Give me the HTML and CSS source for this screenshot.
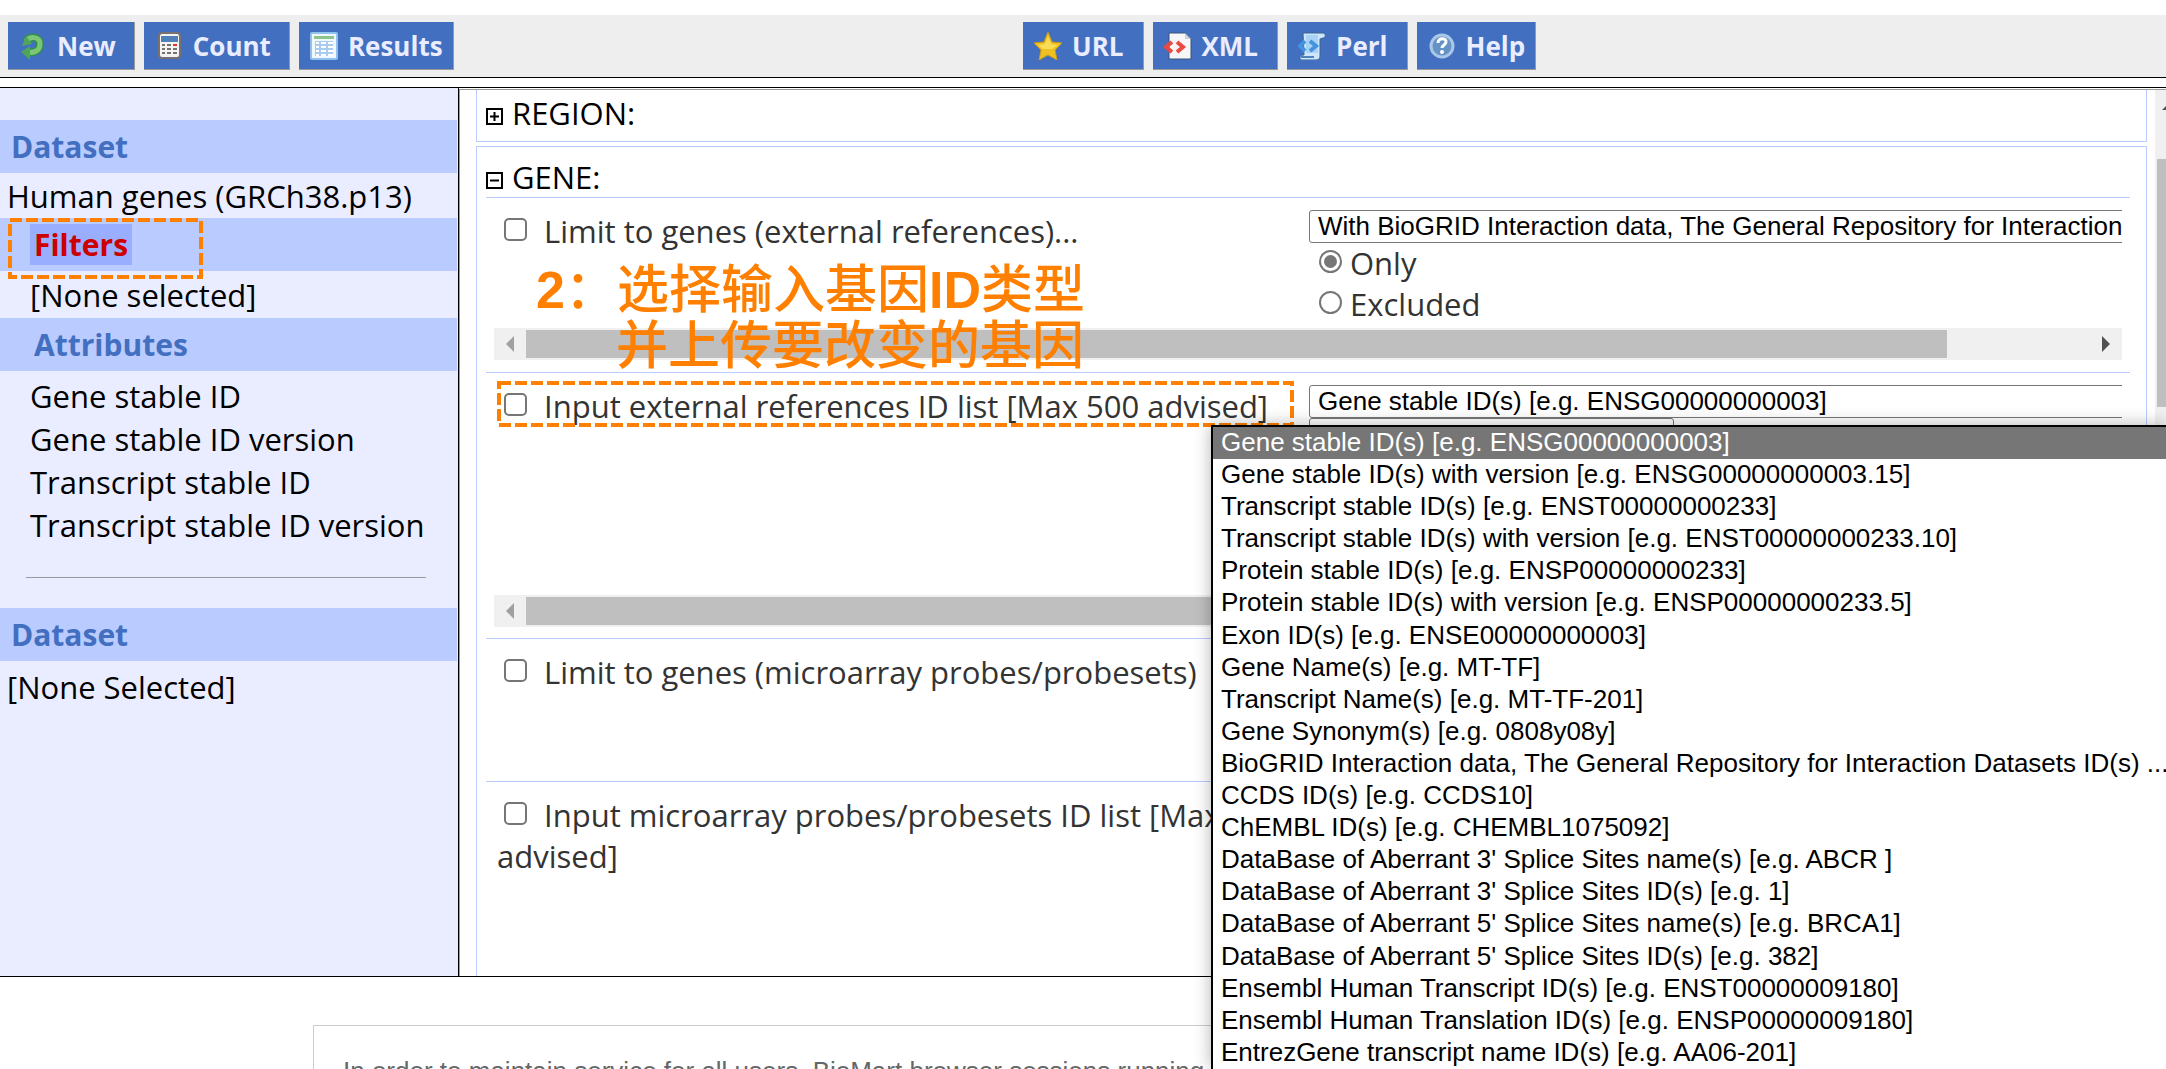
FILE: index.html
```html
<!DOCTYPE html>
<html lang="en">
<head>
<meta charset="utf-8">
<title>BioMart</title>
<link rel="stylesheet" href="styles.css">
</head>
<body>
<header class="toolbar">
  <div class="actions">
    <button class="btn" type="button">
      <svg class="icon" viewBox="0 0 28 28"><path d="M7 9C11 4 21 4 21 12s-8 9-12 8" fill="none" stroke="#2f8f4c" stroke-width="8"/><path d="M7 9C11 4 21 4 21 12s-8 9-12 8" fill="none" stroke="#7cc576" stroke-width="5"/><path d="M3 14L7 4l6 8zM11 14v14L2 20z" fill="#4fa65a"/></svg>
      <span>New</span>
    </button>
    <button class="btn" type="button">
      <svg class="icon" viewBox="0 0 28 28"><rect x="4" y="1" width="21" height="25" rx="3" fill="#f4f4f2" stroke="#77716f" stroke-width="2"/><rect x="6" y="4" width="17" height="6" fill="#4f80b8"/><g fill="#78716f"><path d="M7 12h3v2H7zM12 12h4v2h-4zM7 16h3v2H7zM12 16h4v2h-4zM18 16h4v2h-4zM7 20h3v2H7zM12 20h4v2h-4zM18 20h4v2h-4z"/></g><path d="M18 12h4v2h-4z" fill="#e4352b"/></svg>
      <span>Count</span>
    </button>
    <button class="btn" type="button">
      <svg class="icon" viewBox="0 0 28 28"><rect x="1" y="1" width="26" height="26" rx="1" fill="#eff7ff" stroke="#8fc0ee" stroke-width="2"/><path d="M4 4h20v3H4z" fill="#8cc587"/><path d="M5 9h18v15H5z" fill="#a9cbee"/><path d="M6 10h3v2H6zM11 10h5v2h-5zM18 10h5v2h-5zM6 14h3v2H6zM11 14h5v2h-5zM18 14h5v2h-5zM6 18h3v2H6zM11 18h5v2h-5zM18 18h5v2h-5zM6 22h3v2H6zM11 22h5v2h-5zM18 22h5v2h-5z" fill="#fff"/></svg>
      <span>Results</span>
    </button>
  </div>
  <div class="links">
    <button class="btn" type="button">
      <svg class="icon" viewBox="0 0 28 28"><path d="M14 0l4 10 10 1-7 7 2 10-9-5-9 5 2-10-7-7 10-1z" fill="#efc021" stroke="#c79a1e" stroke-width="1"/><path d="M14 4l3 8 7 1-6 4H9l-5-4 7-1z" fill="#f9dc55"/></svg>
      <span>URL</span>
    </button>
    <button class="btn" type="button">
      <svg class="icon" viewBox="0 0 28 28"><path d="M5 1h16l6 6v20H5z" fill="#f6f6f8" stroke="#39547d"/><path d="M21 1v6h6z" fill="#cdd3dd"/><path d="M8 10l-6 5 6 5M13 10l6 5-6 5" fill="none" stroke="#e84a42" stroke-width="4"/></svg>
      <span>XML</span>
    </button>
    <button class="btn" type="button">
      <svg class="icon" viewBox="0 0 28 28"><path d="M5 1h20c3 0 3 5 0 5l-3 1v17c0 4-3 4-6 4H3c-2-2-1-5 2-5h1z" fill="#cde6fb" stroke="#3d6290"/><path d="M8 3h12v18H8z" fill="#a9d3f5"/><path d="M7 9l-5 5 5 5M12 9l6 5-6 5" fill="none" stroke="#4593df" stroke-width="4"/><path d="M3 25h13" stroke="#4f84bd" stroke-width="2"/></svg>
      <span>Perl</span>
    </button>
    <button class="btn" type="button">
      <svg class="icon" viewBox="0 0 28 28"><circle cx="14" cy="14" r="11" fill="#6593c6" stroke="#a9c8e8" stroke-width="3"/><path d="M10 11c0-6 9-5 8-1 0 3-4 3-4 6" fill="none" stroke="#fff" stroke-width="3"/><circle cx="14" cy="20" r="2" fill="#fff"/></svg>
      <span>Help</span>
    </button>
  </div>
</header>

<main class="workspace">
  <nav class="summary">
    <h2 class="band"><a href="#dataset">Dataset</a></h2>
    <p class="value">Human genes (GRCh38.p13)</p>
    <h2 class="band sub marked"><a class="current" href="#filters">Filters</a>
      <svg class="mark mark-filters"><rect x="2" y="2"/></svg>
    </h2>
    <p class="value inner">[None selected]</p>
    <h2 class="band sub"><a href="#attributes">Attributes</a></h2>
    <ul class="attributes">
      <li>Gene stable ID</li>
      <li>Gene stable ID version</li>
      <li>Transcript stable ID</li>
      <li>Transcript stable ID version</li>
    </ul>
    <hr class="divider">
    <h2 class="band"><a href="#dataset2">Dataset</a></h2>
    <p class="value last">[None Selected]</p>
  </nav>

  <section class="panel">
    <div class="groups">
      <section class="group region">
        <h3 class="group-title"><svg class="toggle" viewBox="0 0 17 17"><path d="M1 1h15v15H1zM4 8.500h9M8.500 4v9"/></svg>REGION:</h3>
      </section>
      <section class="group gene">
        <h3 class="group-title"><svg class="toggle" viewBox="0 0 17 17"><path d="M1 1h15v15H1zM4 8.500h9"/></svg>GENE:</h3>
        <div class="filter xrefs">
          <div class="filter-body">
            <label class="name"><input class="check" type="checkbox">Limit to genes (external references)...</label>
            <div class="options">
              <select class="pick" aria-label="External reference"><option>With BioGRID Interaction data, The General Repository for Interaction Datasets ID(s)</option></select>
              <label class="choice"><input class="radio" type="radio" name="xref" checked>Only</label>
              <label class="choice"><input class="radio" type="radio" name="xref">Excluded</label>
            </div>
          </div>
          <div class="hscroll"><span class="arrow left"></span><span class="thumb"></span><span class="arrow right"></span></div>
          <p class="note"><b>2</b>：选择输入基因<b>ID</b>类型<br><span class="note-next">并上传要改变的基因</span></p>
        </div>
        <div class="filter idlist">
          <svg class="mark mark-idlist"><rect x="2" y="2"/></svg>
          <div class="filter-body">
            <label class="name"><input class="check" type="checkbox">Input external references ID list [Max 500 advised]</label>
            <div class="options">
              <select class="pick" aria-label="ID type"><option>Gene stable ID(s) [e.g. ENSG00000000003]</option></select>
              <textarea class="ids" aria-label="ID list"></textarea>
            </div>
          </div>
          <div class="hscroll"><span class="arrow left"></span><span class="thumb"></span><span class="arrow right"></span></div>
        </div>
        <div class="filter probes">
          <div class="filter-body">
            <label class="name"><input class="check" type="checkbox">Limit to genes (microarray probes/probesets)</label>
          </div>
        </div>
        <div class="filter probelist">
          <div class="filter-body">
            <label class="name"><input class="check" type="checkbox">Input microarray probes/probesets ID list [Max 500 advised]</label>
          </div>
        </div>
      </section>
    </div>
    <div class="vscroll"><span class="arrow up"></span><span class="vthumb"></span></div>
  </section>
</main>

<footer class="notice">In order to maintain service for all users, BioMart browser sessions running for more than 5 minutes are terminated.</footer>

<ul class="menu" role="listbox" aria-label="ID type">
  <li role="option" aria-selected="true">Gene stable ID(s) [e.g. ENSG00000000003]</li>
  <li role="option">Gene stable ID(s) with version [e.g. ENSG00000000003.15]</li>
  <li role="option">Transcript stable ID(s) [e.g. ENST00000000233]</li>
  <li role="option">Transcript stable ID(s) with version [e.g. ENST00000000233.10]</li>
  <li role="option">Protein stable ID(s) [e.g. ENSP00000000233]</li>
  <li role="option">Protein stable ID(s) with version [e.g. ENSP00000000233.5]</li>
  <li role="option">Exon ID(s) [e.g. ENSE00000000003]</li>
  <li role="option">Gene Name(s) [e.g. MT-TF]</li>
  <li role="option">Transcript Name(s) [e.g. MT-TF-201]</li>
  <li role="option">Gene Synonym(s) [e.g. 0808y08y]</li>
  <li role="option">BioGRID Interaction data, The General Repository for Interaction Datasets ID(s) ...</li>
  <li role="option">CCDS ID(s) [e.g. CCDS10]</li>
  <li role="option">ChEMBL ID(s) [e.g. CHEMBL1075092]</li>
  <li role="option">DataBase of Aberrant 3' Splice Sites name(s) [e.g. ABCR ]</li>
  <li role="option">DataBase of Aberrant 3' Splice Sites ID(s) [e.g. 1]</li>
  <li role="option">DataBase of Aberrant 5' Splice Sites name(s) [e.g. BRCA1]</li>
  <li role="option">DataBase of Aberrant 5' Splice Sites ID(s) [e.g. 382]</li>
  <li role="option">Ensembl Human Transcript ID(s) [e.g. ENST00000009180]</li>
  <li role="option">Ensembl Human Translation ID(s) [e.g. ENSP00000009180]</li>
  <li role="option">EntrezGene transcript name ID(s) [e.g. AA06-201]</li>
</ul>
</body>
</html>
```
FILE: styles.css
```css
* { box-sizing: border-box; }

html, body { height: 100%; }

body {
  display: flex;
  flex-direction: column;
  margin: 0;
  padding-top: 15px;
  position: relative;
  overflow: hidden;
  background: #fff;
  color: #000;
  font: 31px/41px "Open Sans", "Noto Sans", sans-serif;
}

h2, h3, p, ul { margin: 0; padding: 0; font-size: inherit; }
ul { list-style: none; }

/* Toolbar */
.toolbar {
  display: grid;
  flex: none;
  grid-template-columns: 1023px 1fr;
  padding: 7px 0;
  background: #eee;
  border-bottom: 1px solid #000;
}
.actions, .links { display: flex; gap: 9px; }
.actions { padding-left: 8px; }
.btn {
  display: flex;
  align-items: center;
  gap: 10px;
  height: 48px;
  padding: 0 18px 0 11px;
  border: 0;
  border-right: 1px solid #999;
  border-bottom: 1px solid #999;
  background: #436fc0;
  color: #e9edff;
  font: bold 26px/40px "Open Sans", "Noto Sans", sans-serif;
}
.links .btn { padding-right: 19px; }
.btn:last-child, .links .btn:last-child { padding-right: 10px; }
.icon { width: 28px; height: 28px; }

/* Two-column work area */
.workspace {
  display: grid;
  flex: none;
  grid-template-columns: 459px 1fr;
  margin-top: 9px;
  border-top: 1px solid #000;
  border-bottom: 1px solid #000;
}
.summary {
  padding: 32px 1px 0 0;
  background: #e9edff;
  border-right: 1px solid #000;
}
.band {
  height: 53px;
  padding: 0 11px;
  font-size: 30px;
  line-height: 54px;
  background: #b9cbff;
}
.band a { color: #436fc0; text-decoration: none; }
.sub { padding-left: 30px; }
.sub a { padding: 0 4px; }
.marked { position: relative; }
.band .current {
  display: inline-block;
  line-height: 41px;
  background: #99aeff;
  color: #c00;
}
.value { height: 45px; padding-left: 7px; line-height: 46px; }
.inner { height: 47px; padding-left: 30px; line-height: 48px; }
.attributes { padding: 4px 0 0 30px; line-height: 43px; }
.divider {
  margin: 30px 31px 30px 26px;
  border: 0;
  border-top: 1px solid #999;
}
.last { line-height: 52px; }

.panel {
  display: grid;
  grid-template-columns: 1fr 11px;
  gap: 8px;
  margin-top: 1px;
  padding-left: 16px;
  border-top: 1px solid #999;
  border-left: 1px solid #999;
}
.group { border: 1px solid #b9cbff; padding: 0 16px 0 9px; }
.region { height: 52px; margin-bottom: 4px; border-top: 0; }
.gene { border-bottom: 0; }
.group-title {
  display: flex;
  align-items: center;
  gap: 9px;
  font-weight: normal;
}
.region .group-title { padding-top: 3px; }
.gene .group-title { height: 50px; padding-top: 10px; }
.toggle {
  width: 17px;
  height: 17px;
  margin-top: 6px;
  fill: none;
  stroke: #000;
  stroke-width: 2;
}

/* Filter rows */
.filter {
  position: relative;
  display: flex;
  flex-direction: column;
  justify-content: space-between;
  padding: 12px 8px;
  border-top: 1px solid #b9cbff;
  color: #333;
}
.xrefs { min-height: 175px; }
.idlist { min-height: 266px; padding-bottom: 11px; }
.probes { min-height: 143px; }
.probelist { min-height: 195px; }
.filter-body {
  display: grid;
  grid-template-columns: 812px 1fr;
  gap: 3px;
  overflow: hidden;
}
.name { padding: 1px 0 0 3px; }
.check, .radio {
  appearance: none;
  width: 23px;
  height: 23px;
  margin: 0 17px 0 7px;
  border: 2px solid #767676;
  border-radius: 5px;
  background: #fff;
}
.check { vertical-align: 2px; }
.options { display: flex; flex-direction: column; overflow: hidden; }
.pick {
  appearance: none;
  flex: none;
  width: 1200px;
  height: 33px;
  padding: 0 8px 1px;
  border: 1px solid #767676;
  border-radius: 3px;
  background: #fff;
  color: #000;
  font: 26px/30px "Liberation Sans", Arial, sans-serif;
}
.ids {
  width: 365px;
  height: 80px;
  border: 1px solid #767676;
  border-radius: 3px;
  resize: none;
}
.choice { display: flex; align-items: center; height: 41px; padding-left: 10px; }
.radio {
  display: grid;
  place-items: center;
  margin: 0 8px 4px 0;
  border-radius: 50%;
}
.radio:checked::before {
  content: "";
  width: 13px;
  height: 13px;
  border-radius: 50%;
  background: #767676;
}

/* Scrollbars */
.hscroll {
  display: grid;
  grid-template-columns: 32px 1421fr 143fr 32px;
  align-items: center;
  height: 32px;
  background: #f0f0f0;
}
.hscroll .right { grid-column: 4; }
.thumb { height: 28px; background: #bfbfbf; }
.arrow {
  justify-self: center;
  border: 8px solid transparent;
}
.left { border-left: 0; border-right-color: #a0a0a0; }
.right { border-right: 0; border-left-color: #505050; }
.vscroll {
  display: flex;
  flex-direction: column;
  padding: 12px 0 0 2px;
  background: #f0f0f0;
  overflow: hidden;
}
.up { align-self: flex-start; margin-left: 5px; border-top: 0; border-bottom-color: #505050; }
.vthumb { height: 248px; margin-top: 49px; background: #bfbfbf; }

/* Tutorial annotations */
.mark { position: absolute; overflow: visible; }
.mark rect {
  width: calc(100% - 4px);
  height: calc(100% - 4px);
  fill: none;
  stroke: #ff8000;
  stroke-width: 4;
  stroke-dasharray: 12 4;
}
.mark-filters { left: 8px; top: 0; width: 195px; height: 61px; }
.mark-idlist { left: 11px; top: 8px; width: 797px; height: 46px; }
.note {
  position: absolute;
  left: 50px;
  top: 64px;
  color: #ff8000;
  font: 500 52px/56px "Liberation Sans", "Noto Sans CJK SC", sans-serif;
  white-space: nowrap;
}
.note-next { padding-left: 80px; }

.notice {
  flex: 1;
  min-height: 0;
  margin: 48px 313px 0;
  padding: 29px 29px 0;
  border: 1px solid #ccc;
  border-bottom: 0;
  color: #666;
  font: 26px/32px "Liberation Sans", Arial, sans-serif;
  white-space: nowrap;
  overflow: hidden;
}

/* Open drop-down list */
.menu {
  position: absolute;
  top: 425px;
  right: 0;
  bottom: 0;
  left: 1211px;
  display: flex;
  flex-direction: column;
  border: solid #000;
  border-width: 2px 0 0 2px;
  background: #fff;
  box-shadow: 0 0 16px rgba(0, 0, 0, .3);
  font: 26px/31px "Liberation Sans", Arial, sans-serif;
  white-space: nowrap;
}
.menu li { flex: 1; padding-left: 8px; }
.menu [aria-selected] { background: #767676; color: #fff; }
```
